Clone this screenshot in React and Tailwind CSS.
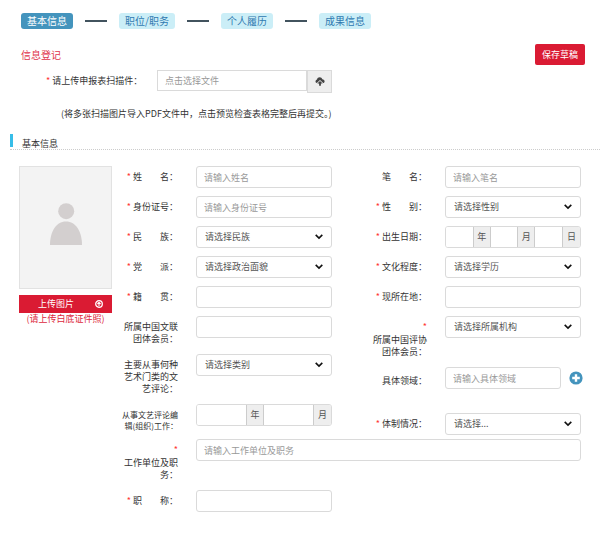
import clsx from "clsx";

const STEPS = ["基本信息", "职位/职务", "个人履历", "成果信息"];

const controlClass =
  "block h-[22px] w-full min-w-0 rounded-[3px] border border-[#dadada] bg-white text-[#555] placeholder:text-[#999] focus:border-[#4697bd] focus:outline-none";

function Star() {
  return <span className="text-[#f33]">*</span>;
}

function Steps({ current }) {
  return (
    <nav className="flex items-center gap-3 px-[21px] text-[10px] leading-4">
      {STEPS.map((step, i) => (
        <div key={step} className="flex items-center gap-3">
          {i > 0 && <span className="h-[2px] w-[22px] bg-[#42535e]" />}
          <a
            href="#"
            className={clsx(
              "rounded-[3px] px-1.5",
              i === current ? "bg-[#4494bd] text-white" : "bg-[#cbeef7] text-[#2f79b0]"
            )}
          >
            {step}
          </a>
        </div>
      ))}
    </nav>
  );
}

// `starAbove` puts the required mark on a line of its own, for long labels
function Field({ id, label, required, starAbove, small, className, labelClassName, children }) {
  return (
    <div className={clsx("flex items-start gap-[18px]", className || "pb-2")}>
      <label
        htmlFor={id}
        className={clsx(
          "w-14 shrink-0 pb-[1px] text-right whitespace-pre-wrap",
          small ? "text-[8px] leading-[11px]" : "leading-3",
          labelClassName || "pt-[5px]"
        )}
      >
        {starAbove && (
          <span className="block h-[13px]">
            <Star />
          </span>
        )}
        {required && (
          <>
            <Star />{" "}
          </>
        )}
        {label}
      </label>
      <div className="min-w-0 flex-1">{children}</div>
    </div>
  );
}

function TextInput({ id, placeholder }) {
  return <input id={id} type="text" placeholder={placeholder} className={clsx(controlClass, "px-[7px]")} />;
}

function Select({ id, placeholder }) {
  return (
    <div className="relative">
      <select id={id} className={clsx(controlClass, "appearance-none pr-5 pl-2")}>
        <option>{placeholder}</option>
      </select>
      <svg
        viewBox="0 0 8 6"
        className="pointer-events-none absolute top-2 right-[9px] h-[6px] w-2"
        fill="none"
        stroke="#111"
        strokeWidth="1.6"
      >
        <path d="M0.7 0.9 L4 4.1 L7.3 0.9" />
      </svg>
    </div>
  );
}

function DateParts({ id, label, units }) {
  return (
    <div
      role="group"
      aria-label={label}
      className="flex h-[22px] overflow-hidden rounded-[3px] border border-[#dadada]"
    >
      {units.map((unit, i) => (
        <div key={unit} className="flex min-w-0 flex-1">
          <input
            id={i === 0 ? id : undefined}
            type="text"
            aria-label={unit}
            className="w-0 min-w-0 flex-1 bg-white px-1 text-[#555] focus:outline-none"
          />
          <span
            className={clsx(
              "flex w-[18px] items-center justify-center border-l border-[#ccc] bg-[#eee] text-[#555]",
              i < units.length - 1 && "border-r"
            )}
          >
            {unit}
          </span>
        </div>
      ))}
    </div>
  );
}

function UploadCloudIcon() {
  return (
    <svg viewBox="0 0 10 9" className="h-[9px] w-[10px]" fill="#444">
      <path d="M0.5 4.6 C0.5 3.4 1.3 2.7 2 2.5 C2.3 1.1 3.4 0.3 4.7 0.3 C6 0.3 7 1.1 7.3 2.3 C8.7 2.4 9.6 3.3 9.6 4.5 C9.6 5.4 9 6 8.2 6.1 L5 2.9 L1.8 6.1 C1 6 0.5 5.4 0.5 4.6 Z" />
      <path d="M5 3.9 L7.7 6.6 H5.9 V8.8 H4.1 V6.6 H2.3 Z" />
    </svg>
  );
}

function Photo() {
  return (
    <div className="w-[93px] shrink-0 text-center">
      <div className="flex h-[123px] items-center justify-center border border-[#e2e2e2] bg-[#f3f3f3] pb-2">
        <svg viewBox="0 0 32 42" className="h-[42px] w-8" fill="#d3cfcf">
          <circle cx="16.2" cy="8.2" r="8" />
          <path d="M0 42 C0 29 6 18.6 16 18.6 C26 18.6 32 29 32 42 Z" />
        </svg>
      </div>
      <button
        type="button"
        className="mt-[6px] flex h-[18px] w-full items-center justify-between bg-[#da1b33] pr-[9px] pl-[19px] text-white"
      >
        上传图片
        <svg viewBox="0 0 8 8" className="size-2" fill="none" stroke="#fff">
          <circle cx="4" cy="4" r="3.3" strokeWidth="1.3" />
          <path d="M4 6.2 V2.4 M2.4 4 L4 2.4 L5.6 4" strokeWidth="1.1" />
        </svg>
      </button>
      <p className="leading-3 whitespace-nowrap text-[#dc2840]">(请上传白底证件照)</p>
    </div>
  );
}

export default function App() {
  return (
    <div className="bg-white pt-[13px] pb-6 font-['Noto_Sans_CJK_SC','Noto_Sans',sans-serif] text-[9px] leading-3 text-[#333]">
      <Steps current={0} />

      <form>
        <div className="mt-[15px] flex items-center justify-between pr-[15px] pl-[21px]">
          <h1 className="text-[10px] text-[#e0354b]">信息登记</h1>
          <button type="button" className="h-[21px] rounded-[2px] bg-[#da1b33] px-[7px] text-white">
            保存草稿
          </button>
        </div>

        <div className="mt-[5px] flex items-start gap-5 pl-[46px]">
          <label htmlFor="scan" className="w-[91px] shrink-0 pt-[5px] whitespace-nowrap">
            <Star /> 请上传申报表扫描件：
          </label>
          <div className="flex w-[175px] items-start">
            <input
              id="scan"
              type="text"
              placeholder="点击选择文件"
              className="h-[21px] min-w-0 flex-1 border border-[#dadada] px-[7px] placeholder:text-[#999] focus:outline-none"
            />
            <button
              type="button"
              aria-label="上传"
              className="flex h-[23px] w-[25px] items-center justify-center border border-[#dadada] bg-[#eee]"
            >
              <UploadCloudIcon />
            </button>
          </div>
        </div>
        <p className="mt-[15px] pl-[61px]">(将多张扫描图片导入PDF文件中，点击预览检查表格完整后再提交。)</p>

        <h2 className="mt-[14px] ml-[10px] flex h-4 items-end gap-[9px] border-b border-dotted border-[#ccc] leading-[10px]">
          <span className="h-[13px] w-[3px] self-start bg-[#37bde8]" />
          基本信息
        </h2>

        <div className="mt-4 flex items-start gap-[10px] px-[19px]">
          <Photo />

          <div className="grid min-w-0 flex-1 grid-cols-2 gap-x-[39px]">
            <div>
              <Field id="name" label="姓　　名：" required>
                <TextInput id="name" placeholder="请输入姓名" />
              </Field>
              <Field id="idcard" label="身份证号：" required>
                <TextInput id="idcard" placeholder="请输入身份证号" />
              </Field>
              <Field id="nation" label="民　　族：" required>
                <Select id="nation" placeholder="请选择民族" />
              </Field>
              <Field id="party" label="党　　派：" required>
                <Select id="party" placeholder="请选择政治面貌" />
              </Field>
              <Field id="origin" label="籍　　贯：" required>
                <TextInput id="origin" />
              </Field>
              <Field id="federation" label="所属中国文联团体会员：">
                <TextInput id="federation" />
              </Field>
              <Field id="category" label="主要从事何种艺术门类的文艺评论：">
                <Select id="category" placeholder="请选择类别" />
              </Field>
              <Field id="since" label="从事文艺评论编辑(组织)工作：" small className="pb-1">
                <DateParts id="since" label="从事文艺评论编辑(组织)工作" units={["年", "月"]} />
              </Field>
            </div>

            <div>
              <Field id="penname" label="笔　　名：">
                <TextInput id="penname" placeholder="请输入笔名" />
              </Field>
              <Field id="gender" label="性　　别：" required>
                <Select id="gender" placeholder="请选择性别" />
              </Field>
              <Field id="birth" label="出生日期：" required>
                <DateParts id="birth" label="出生日期" units={["年", "月", "日"]} />
              </Field>
              <Field id="education" label="文化程度：" required>
                <Select id="education" placeholder="请选择学历" />
              </Field>
              <Field id="location" label="现所在地：" required>
                <TextInput id="location" />
              </Field>
              <Field id="association" label="所属中国评协团体会员：" starAbove>
                <Select id="association" placeholder="请选择所属机构" />
              </Field>
              <Field id="domain" label="具体领域：" className="pb-6" labelClassName="pt-2">
                <div className="flex items-center gap-2">
                  <TextInput id="domain" placeholder="请输入具体领域" />
                  <button type="button" aria-label="添加" className="-mr-[2px] shrink-0">
                    <svg viewBox="0 0 14 14" className="size-[14px]">
                      <circle cx="7" cy="7" r="6.6" fill="#4494bd" />
                      <path d="M7 3.2 V10.8 M3.2 7 H10.8" stroke="#fff" strokeWidth="2.4" />
                    </svg>
                  </button>
                </div>
              </Field>
              <Field id="system" label="体制情况：" required className="pb-1">
                <Select id="system" placeholder="请选择..." />
              </Field>
            </div>

            <div className="col-span-2">
              <Field id="work" label="工作单位及职务：" starAbove>
                <TextInput id="work" placeholder="请输入工作单位及职务" />
              </Field>
            </div>
            <Field id="title" label="职　　称：" required>
              <TextInput id="title" />
            </Field>
          </div>
        </div>
      </form>
    </div>
  );
}
